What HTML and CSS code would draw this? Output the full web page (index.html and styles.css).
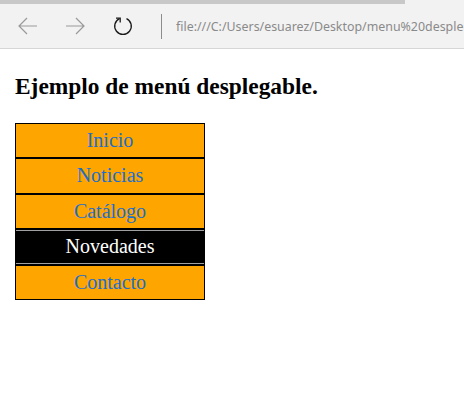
FILE: index.html
```html
<!DOCTYPE html>
<html lang="es">
<head>
<meta charset="utf-8">
<title>Menú desplegable</title>
<link rel="stylesheet" href="styles.css">
</head>
<body>
<div class="browser">
  <div class="progress"></div>
  <div class="toolbar">
    <span class="btn">
      <svg width="22" height="22" viewBox="0 0 22 22"><path d="M20 11H2M10 3L2 11L10 19" fill="none" stroke="#9a9a9a" stroke-width="1.2"/></svg>
    </span>
    <span class="btn">
      <svg width="22" height="22" viewBox="0 0 22 22"><path d="M2 11H20M12 3L20 11L12 19" fill="none" stroke="#9a9a9a" stroke-width="1.2"/></svg>
    </span>
    <span class="btn">
      <svg width="22" height="22" viewBox="0 0 22 22"><path d="M7.5 3.6A8.3 8.3 0 1 0 14.5 3.6" fill="none" stroke="#1a1a1a" stroke-width="1.3"/><path d="M4 3.2H8.2V7.4" fill="none" stroke="#1a1a1a" stroke-width="1.3"/></svg>
    </span>
    <span class="sep"></span>
    <span class="url">file:///C:/Users/esuarez/Desktop/menu%20desplegable.html</span>
  </div>
</div>
<main class="page">
  <h2 class="title">Ejemplo de menú desplegable.</h2>
  <ul class="menu">
    <li class="item"><a href="#">Inicio</a></li>
    <li class="item"><a href="#">Noticias</a></li>
    <li class="item"><a href="#">Catálogo</a></li>
    <li class="item active"><a href="#">Novedades</a></li>
    <li class="item"><a href="#">Contacto</a></li>
  </ul>
</main>
</body>
</html>
```
FILE: styles.css
```css
html, body {
  margin: 0;
  padding: 0;
  background: #fff;
  overflow: hidden;
}
.browser {
  background: #f2f2f2;
  border-bottom: 1px solid #d6d6d6;
  height: 48px;
  position: relative;
}
.progress {
  position: absolute;
  left: 0;
  top: 0;
  width: 405px;
  height: 4px;
  background: #c8c8c8;
}
.toolbar {
  display: flex;
  align-items: center;
  height: 48px;
  padding-left: 15.5px;
  padding-top: 4px;
  box-sizing: border-box;
  white-space: nowrap;
  overflow: hidden;
}
.btn {
  display: flex;
  flex: none;
  width: 24px;
  height: 24px;
  align-items: center;
  justify-content: center;
  margin-right: 23.5px;
}
.sep {
  flex: none;
  width: 1px;
  height: 25px;
  background: #8c8c8c;
  margin-left: 3px;
  margin-right: 14px;
}
.url {
  font-family: "Noto Sans", "Open Sans", sans-serif;
  font-size: 12.4px;
  color: #8a8a8a;
  overflow: hidden;
}
.page {
  padding: 0 15px;
  font-family: "Liberation Serif", "Times New Roman", serif;
}
.title {
  font-size: 23.4px;
  font-weight: bold;
  margin: 23px 0 23px;
  line-height: 28px;
  color: #000;
}
.menu {
  list-style: none;
  margin: 0;
  padding: 0;
  width: 190px;
}
.item {
  background: #ffa500;
  border: 1px solid #000;
  text-align: center;
  height: 33.4px;
  line-height: 33px;
  font-size: 20px;
}
.item a {
  color: #1a6fce;
  text-decoration: none;
  display: block;
}
.item.active {
  background: #000;
  box-shadow: inset 0 1px 0 #a0a0a0, inset 0 -1px 0 #a0a0a0;
}
.item.active a {
  color: #fff;
}
```
